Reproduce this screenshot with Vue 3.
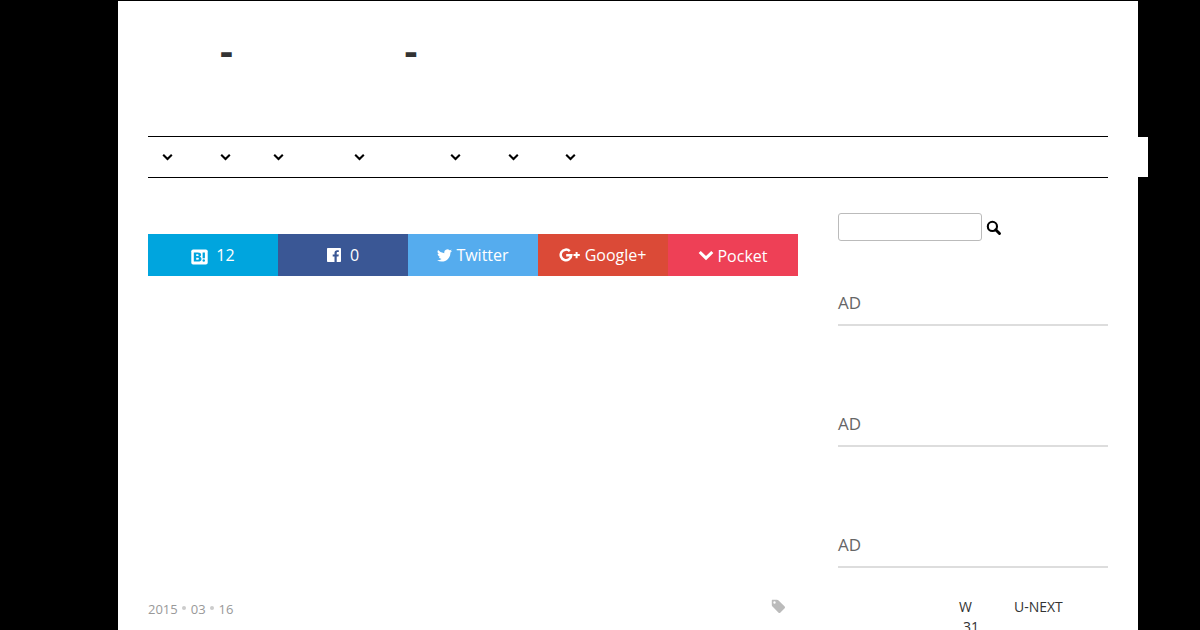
<script setup>
// label widths of the nav entries, the arrow sits in front of each
const navItems = [58, 53, 81, 96, 58, 57, 40]

const ads = ['AD', 'AD', 'AD']
</script>

<template>
  <div class="wrapper">
    <header class="header">
      <h1 class="site-title"><span>-</span><span>-</span></h1>
    </header>

    <nav class="nav">
      <ul class="nav-list">
        <li v-for="(w, i) in navItems" :key="i" :style="{ width: w + 'px' }">
          <svg width="11" height="8" viewBox="0 0 11 8"><path d="M1.2 1.8 5.5 6 9.8 1.8" fill="none" stroke="#000" stroke-width="2.1" /></svg>
        </li>
      </ul>
    </nav>

    <div class="content">
      <main class="main">
        <ul class="share">
          <li class="hatena">
            <svg width="17" height="16" viewBox="0 0 17 16">
              <rect x="0.3" y="0.4" width="16.4" height="15.2" rx="1.8" fill="#fff" />
              <path fill="#00a5de" fill-rule="evenodd" d="M2.800 3.500h4c2.200 0 3.300.7 3.300 2.300 0 1-.6 1.700-1.600 1.900 1.300.2 2 1 2 2.200 0 1.800-1.300 2.700-3.600 2.700H2.800zM5.200 5.300v1.800h1c.9 0 1.400-.3 1.400-.9s-.5-.9-1.400-.9zM5.200 8.800v2h1.200c1 0 1.500-.3 1.500-1s-.5-1-1.500-1z" />
              <path fill="#00a5de" d="M11.600 3.500h2.300v5.800h-2.300z" />
              <circle cx="12.750" cy="11.400" r="1.250" fill="#00a5de" />
            </svg>
            <span>12</span>
          </li>
          <li class="facebook">
            <svg width="14" height="14" viewBox="0 0 14 14"><path fill="#fff" d="M.8 0h12.400c.5 0 .8.3.8.8v12.400c0 .5-.3.8-.8.8H9.700V8.600h1.800l.3-2.100H9.700V5.100c0-.6.2-1 1-1h1.100V2.300c-.2 0-.9-.1-1.600-.1-1.700 0-2.700 1-2.700 2.700v1.600H5.700v2.100h1.800V14H.8c-.5 0-.8-.3-.8-.8V.8C0 .3.3 0 .8 0z" /></svg>
            <span>0</span>
          </li>
          <li class="twitter">
            <svg width="15" height="13" viewBox="0 0 24 20"><path fill="#fff" d="M24 2.400a9.800 9.800 0 0 1-2.800.8A4.900 4.900 0 0 0 23.300.5a9.900 9.900 0 0 1-3.100 1.200 4.900 4.900 0 0 0-8.400 4.500A14 14 0 0 1 1.700 1a4.900 4.900 0 0 0 1.500 6.600 4.900 4.900 0 0 1-2.200-.6v.1a4.900 4.900 0 0 0 3.900 4.800 5 5 0 0 1-2.200.1 4.900 4.900 0 0 0 4.600 3.400A9.900 9.900 0 0 1 0 17.500 14 14 0 0 0 7.500 19.700c9.100 0 14-7.500 14-14v-.6A10 10 0 0 0 24 2.400z" /></svg>
            <span>Twitter</span>
          </li>
          <li class="google">
            <svg width="22" height="14" viewBox="0 0 22 14">
              <path fill="none" stroke="#fff" stroke-width="2.500" d="M10.800 3.200A5.300 5.300 0 1 0 12.300 7.200H7.200" />
              <path fill="#fff" d="M16.600 4h2v2.100h2.200v2h-2.200v2.200h-2V8.100h-2.100v-2h2.100z" />
            </svg>
            <span>Google+</span>
          </li>
          <li class="pocket">
            <svg width="16" height="11" viewBox="0 0 16 11"><path fill="none" stroke="#fff" stroke-width="3" d="M1.700 2 8 8.100 14.300 2" /></svg>
            <span>Pocket</span>
          </li>
        </ul>

        <div class="meta">
          <p class="date">2015<i></i>03<i></i>16</p>
          <svg width="15" height="15" viewBox="0 0 15 15"><path fill="#bbb" fill-rule="evenodd" d="M1.200.8h4.700c.6 0 1.300.3 1.700.7l6.100 6.100c.5.5.5 1.100 0 1.600l-4.500 4.500c-.5.5-1.100.5-1.600 0L1.500 7.600C1.100 7.200.8 6.500.8 5.900V1.800c0-.6 0-1 .4-1zM3.500 2.300a1.200 1.200 0 1 0 0 2.400 1.200 1.200 0 0 0 0-2.400z" /></svg>
        </div>
      </main>

      <aside class="sidebar">
        <form class="search" @submit.prevent>
          <input type="text">
          <button type="submit">
            <svg width="16" height="16" viewBox="0 0 16 16">
              <circle cx="6.400" cy="6.400" r="4.600" fill="none" stroke="#000" stroke-width="2.100" />
              <path d="M9.700 9.700 13.500 13.500" stroke="#000" stroke-width="2.900" stroke-linecap="round" />
            </svg>
          </button>
        </form>

        <h4 v-for="(ad, i) in ads" :key="i" class="widget-title">{{ ad }}</h4>

        <div class="tags">
          <p><span class="tag-w">W</span><span>U-NEXT</span></p>
          <p class="second">31</p>
        </div>
      </aside>
    </div>
  </div>
</template>

<style>
body {
  background: #000;
  overflow: hidden;
}
</style>

<style scoped>
.wrapper {
  box-sizing: border-box;
  width: 1020px;
  height: 629px;
  margin: 1px 0 0 118px;
  padding: 0 30px;
  background: #fff;
  font-family: "Open Sans", sans-serif;
  color: #333;
}

ul, p, h1, h4 {
  margin: 0;
  padding: 0;
  list-style: none;
}

svg {
  display: block;
  flex: none;
}

.header {
  height: 135px;
}

.site-title {
  display: flex;
  padding: 24px 0 0 72px;
  font-size: 40px;
  line-height: 50px;
}

.site-title span {
  width: 184.5px;
}

.nav {
  height: 40px;
  border-top: 1px solid #000;
  border-bottom: 1px solid #000;
}

.nav-list {
  display: flex;
  align-items: center;
  box-sizing: border-box;
  width: 1000px;
  height: 40px;
  padding-left: 14px;
  background: #fff;
}

.content {
  display: flex;
  justify-content: space-between;
}

.main {
  width: 650px;
  padding-top: 56px;
}

.share {
  display: flex;
  font-size: 16px;
  line-height: 42px;
  color: #fff;
}

.share li {
  display: flex;
  align-items: center;
  justify-content: center;
  width: 130px;
  height: 42px;
}

.hatena {
  gap: 8px;
  background: #00a5de;
}

.hatena svg {
  margin-top: 3px;
}

.facebook {
  gap: 9px;
  background: #3a5795;
}

.twitter {
  gap: 4px;
  background: #55acee;
}

.google {
  gap: 4px;
  background: #db4a37;
}

.google span {
  margin-right: 1px;
}

.pocket {
  gap: 3px;
  background: #ee4056;
}

.pocket span {
  padding-top: 2px;
}

.meta {
  display: flex;
  justify-content: space-between;
  padding: 322px 12px 0 0;
}

.meta svg {
  margin-top: 1px;
}

.date {
  display: flex;
  align-items: center;
  padding-top: 1px;
  font-size: 13px;
  line-height: 20px;
  color: #999;
}

.date i {
  width: 4px;
  height: 4px;
  margin: 0 4.500px 3px;
  border-radius: 50%;
  background: #ccc;
}

.sidebar {
  width: 270px;
  padding-top: 35px;
}

.search {
  display: flex;
  align-items: center;
  gap: 4px;
  height: 28px;
}

.search input {
  box-sizing: border-box;
  width: 144px;
  height: 28px;
  border: 1px solid #bbb;
  border-radius: 3px;
}

.search button {
  padding: 2px 0 0;
  border: none;
  background: none;
}

.widget-title {
  height: 33px;
  margin: 50px 0 86px;
  border-bottom: 2px solid #ddd;
  font-size: 17px;
  font-weight: normal;
  line-height: 24px;
  color: #666;
}

.widget-title + .widget-title {
  margin-top: 0;
}

.tags {
  height: 33px;
  margin-top: -57px;
  overflow: hidden;
  font-size: 14px;
  line-height: 20px;
}

.tags p {
  display: flex;
  padding-left: 121px;
}

.tag-w {
  width: 55px;
}

.tags .second {
  padding-left: 125px;
}
</style>
